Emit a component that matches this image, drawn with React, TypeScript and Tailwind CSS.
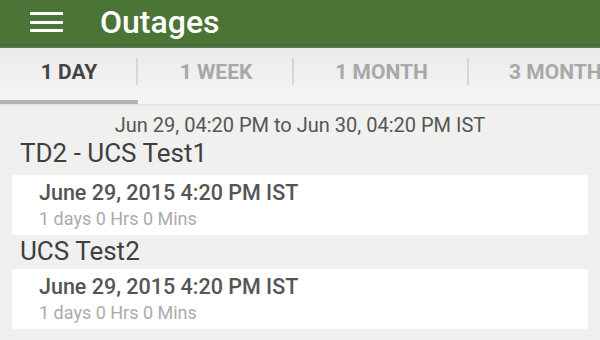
import React from "react";

const font = { fontFamily: "Roboto, 'Noto Sans', sans-serif" };

function Tab({ label, w, active, sep }: { label: string; w: string; active?: boolean; sep?: boolean }) {
  return (
    <div className={`relative flex h-full shrink-0 items-center pb-[8px] ${w}`}>
      <span
        className={`text-[21px] font-bold leading-none whitespace-nowrap ${active ? "text-[#444444]" : "text-[#a8a8a8]"}`}
      >
        {label}
      </span>
      {sep && <div className="absolute right-0 top-[10px] h-[27px] w-[2px] bg-[#d6d6d6]" />}
      {active && <div className="absolute bottom-0 left-0 h-[4px] w-full bg-[#b4b4b4]" />}
    </div>
  );
}

function Card({ date, dur }: { date: string; dur: string }) {
  return (
    <div className="mx-[12px] flex h-[60px] flex-col justify-center rounded-[2px] bg-white pl-[27px]">
      <div className="text-[21.5px] font-medium leading-[26px] text-[#555555]">{date}</div>
      <div className="mt-[2px] text-[18px] leading-[22px] text-[#ababab]">{dur}</div>
    </div>
  );
}

export default function App() {
  return (
    <div className="h-[340px] w-[600px] overflow-hidden bg-[#f0f0ee]" style={font}>
      <div className="flex h-[44px] items-center bg-[#4b7536]">
        <div className="ml-[30px] flex w-[33px] flex-col gap-[5.5px]">
          <div className="h-[3px] bg-white" />
          <div className="h-[3px] bg-white" />
          <div className="h-[3px] bg-white" />
        </div>
        <div className="ml-[37px] text-[32px] font-medium leading-none text-white">Outages</div>
      </div>
      <div className="h-[4px] bg-gradient-to-b from-[#3d6330] to-[#5d7d52]" />
      <div className="flex h-[56px] overflow-hidden bg-gradient-to-b from-[#ebebeb] to-[#f5f5f5]">
        <Tab label="1 DAY" w="w-[138px] justify-center" active sep />
        <Tab label="1 WEEK" w="w-[156px] justify-center" sep />
        <Tab label="1 MONTH" w="w-[175px] justify-center" sep />
        <Tab label="3 MONTHS" w="w-[175px] pl-[40px]" />
      </div>
      <div className="h-[2px] bg-[#e6e6e4]" />
      <div className="pt-[7px] text-center text-[20px] leading-[24px] text-[#555555]">
        Jun 29, 04:20 PM to Jun 30, 04:20 PM IST
      </div>
      <div className="pl-[20px] pt-[1px] text-[26px] leading-[30px] text-[#3f3f3f]">TD2 - UCS Test1</div>
      <div className="pt-[7px]">
        <Card date="June 29, 2015 4:20 PM IST" dur="1 days 0 Hrs 0 Mins" />
      </div>
      <div className="pl-[20px] pt-[1px] text-[26px] leading-[30px] text-[#3f3f3f]">UCS Test2</div>
      <div className="pt-[3px]">
        <Card date="June 29, 2015 4:20 PM IST" dur="1 days 0 Hrs 0 Mins" />
      </div>
    </div>
  );
}
